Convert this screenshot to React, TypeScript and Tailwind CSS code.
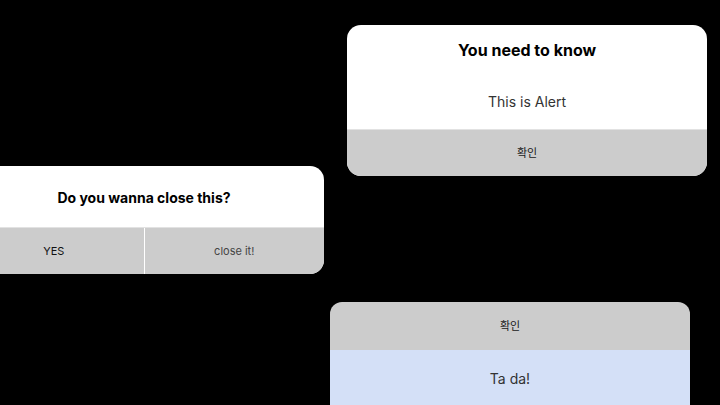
import React from "react";

const font = { fontFamily: "Inter, 'Noto Sans CJK KR', sans-serif" };

function ConfirmButton({ label }: { label: string }) {
  return (
    <button
      type="button"
      className="flex h-[47px] w-full items-center justify-center border-t border-[#e2e2e2] bg-[#cccccc] text-[11px] text-[#1a1a1a]"
    >
      {label}
    </button>
  );
}

function AlertCard() {
  return (
    <div className="absolute left-[347px] top-[25px] w-[360px] overflow-hidden rounded-[14px] bg-white">
      <h2 className="pt-[13px] text-center text-[16px] leading-6 font-bold text-black">
        You need to know
      </h2>
      <p className="mt-[28px] pb-[15px] text-center text-[14px] leading-6 text-[#333]">
        This is Alert
      </p>
      <ConfirmButton label="확인" />
    </div>
  );
}

function ConfirmCard() {
  return (
    <div className="absolute left-[-36px] top-[166px] w-[360px] overflow-hidden rounded-[14px] bg-white">
      <h2 className="pt-[20px] pb-[17px] text-center text-[14px] leading-6 font-bold text-black">
        Do you wanna close this?
      </h2>
      <div className="flex h-[47px] border-t border-[#e2e2e2] bg-[#cccccc] text-[11px]">
        <button type="button" className="flex-1 text-[#111]">
          YES
        </button>
        <div className="w-px bg-white" />
        <button type="button" className="flex-1 text-[#444]">
          close it!
        </button>
      </div>
    </div>
  );
}

function ToastCard() {
  return (
    <div className="absolute left-[330px] top-[302px] w-[360px] overflow-hidden rounded-t-[12px]">
      <div className="flex h-[48px] items-center justify-center bg-[#cccccc] text-[11px] text-[#1a1a1a]">
        확인
      </div>
      <div className="flex h-[80px] items-start justify-center bg-[#d4e0f7] pt-[17px] text-[14px] leading-6 text-[#333]">
        Ta da!
      </div>
    </div>
  );
}

export default function App() {
  return (
    <div className="relative h-[405px] w-[720px] overflow-hidden bg-black" style={font}>
      <AlertCard />
      <ConfirmCard />
      <ToastCard />
    </div>
  );
}
